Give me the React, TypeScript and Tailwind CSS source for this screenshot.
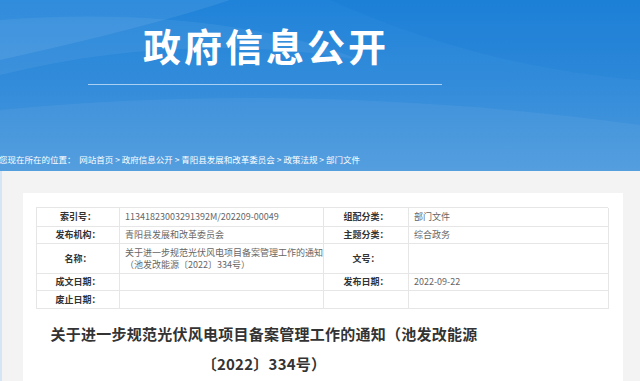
import React from "react";

const rows: { h: string; cells: [string, React.ReactNode, string, React.ReactNode] }[] = [
  { h: "h-[19px]", cells: ["索引号：", "11341823003291392M/202209-00049", "组配分类：", "部门文件"] },
  { h: "h-[17px]", cells: ["发布机构：", "青阳县发展和改革委员会", "主题分类：", "综合政务"] },
  {
    h: "h-[30px]",
    cells: [
      "名称：",
      <span className="leading-[12px]">
        关于进一步规范光伏风电项目备案管理工作的通知
        <br />
        （池发改能源〔2022〕334号）
      </span>,
      "文号：",
      "",
    ],
  },
  { h: "h-[17px]", cells: ["成文日期：", "", "发布日期：", "2022-09-22"] },
  { h: "h-[18px]", cells: ["废止日期：", "", "", ""] },
];

export default function App() {
  return (
    <div
      className="w-[640px] h-[381px] overflow-hidden bg-[#f3f3f3]"
      style={{ fontFamily: '"Noto Sans CJK SC", "Noto Sans", sans-serif' }}
    >
      {/* Header */}
      <div className="relative h-[171px] overflow-hidden bg-gradient-to-b from-[#1f83d9] via-[#338cda] to-[#4b99dd]">
        <svg className="absolute inset-0" width="640" height="171" viewBox="0 0 640 171">
          <path d="M0 0 H230 C170 20 90 40 0 60 Z" fill="#ffffff" opacity="0.08" />
          <path d="M0 20 C120 10 260 20 360 60 C250 40 120 45 0 75 Z" fill="#ffffff" opacity="0.06" />
          <path d="M0 110 C200 90 420 95 640 125 V171 H0 Z" fill="#ffffff" opacity="0.05" />
          <path d="M330 0 C420 40 520 70 640 80 V0 Z" fill="#0c6fcf" opacity="0.15" />
        </svg>
        <div className="relative flex flex-col items-center w-[529px] pt-[25px]">
          <div className="text-[38px] leading-[40px] font-bold text-white tracking-[3px] pl-[3px]">
            政府信息公开
          </div>
          <div className="mt-[19px] w-[354px] h-px bg-[#a9d0f2]" />
        </div>
        <div className="relative mt-[69px] -ml-[1px] text-[8.5px] leading-[11px] text-white whitespace-nowrap">
          您现在所在的位置：&nbsp;&nbsp;网站首页 &gt; 政府信息公开 &gt; 青阳县发展和改革委员会 &gt; 政策法规 &gt; 部门文件
        </div>
      </div>

      {/* Body */}
      <div className="flex h-[210px] border-l-[2px] border-[#d5e5f5]">
        <div className="ml-[21px] mt-[22px] w-[600px] bg-white pt-[14px] pl-[13px]">
          <div className="w-[572px] border-t border-l border-[#e6e6e6]">
            {rows.map((r, i) => (
              <div key={i} className={`grid grid-cols-[83px_204px_85px_200px] ${r.h}`}>
                {r.cells.map((c, j) => (
                  <div
                    key={j}
                    className={`border-r border-b border-[#e6e6e6] flex items-center text-[9px] ${
                      j % 2 === 0
                        ? "justify-center font-bold text-[#333]"
                        : "pl-[5px] text-[#666]"
                    }`}
                  >
                    {c}
                  </div>
                ))}
              </div>
            ))}
          </div>
          <div className="w-[456px] mt-[10px] text-center text-[15px] leading-[30px] font-bold text-[#333] tracking-[0.25px]">
            关于进一步规范光伏风电项目备案管理工作的通知（池发改能源
            <br />
            〔2022〕334号）
          </div>
        </div>
      </div>
    </div>
  );
}
